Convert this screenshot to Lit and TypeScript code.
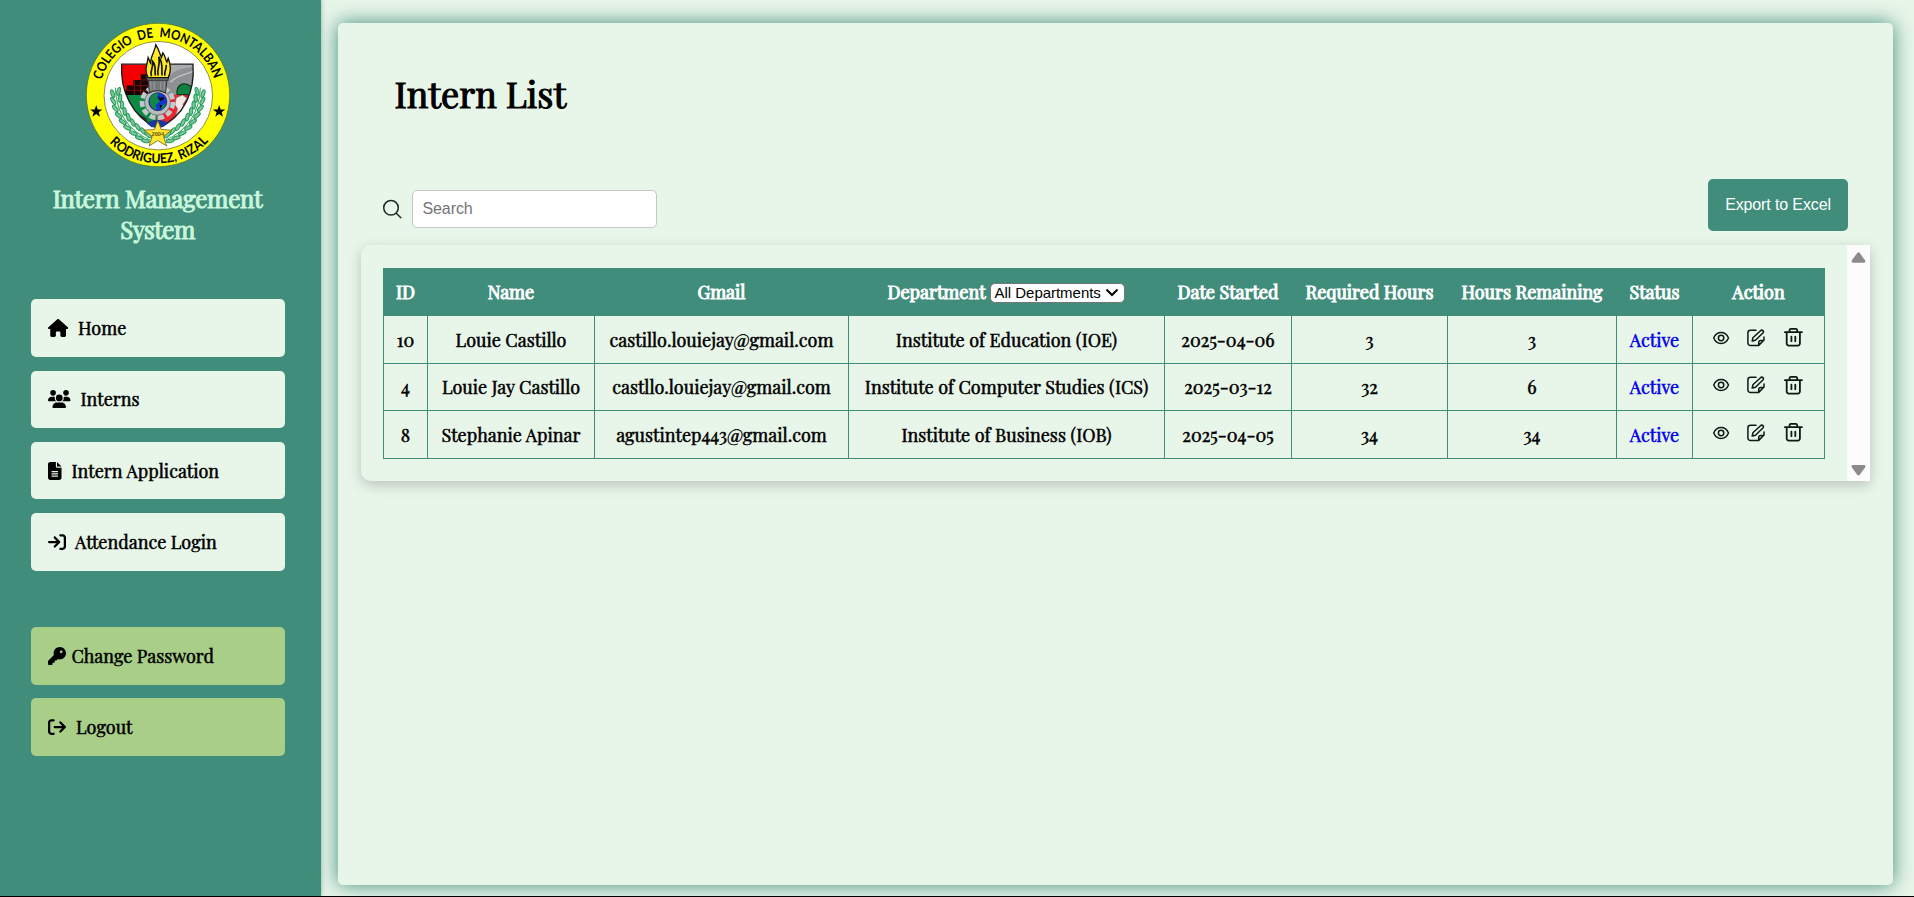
import { LitElement, html, svg, css } from "lit";
import { customElement, property } from "lit/decorators.js";

/** Sets a run of text to a given width by adjusting its tracking. */
@customElement("fit-text")
class FitText extends LitElement {
  @property() text = "";
  @property({ type: Number }) width = 0;

  static styles = css`
    :host { display: inline-block; white-space: nowrap; text-align: left; }
    .run { display: inline-block; white-space: pre; }
  `;

  render() {
    return html`<span class="run">${this.text}</span>`;
  }

  updated() {
    const run = this.renderRoot.querySelector(".run") as HTMLElement;
    run.style.letterSpacing = "normal";
    const natural = run.getBoundingClientRect().width;
    const gap = (this.width - natural) / Math.max(1, this.text.length - 1);
    // Tracking switches ligatures off, so it is applied only where it is visible.
    if (Math.abs(this.width - natural) > 2.5) run.style.letterSpacing = gap + "px";
  }
}

const t = (text: string, width: number) => html`<fit-text .text=${text} .width=${width}></fit-text>`;

const ICONS: Record<string, [number, string]> = {
  house: [576, "M575.8 255.5c0 18-15 32.1-32 32.1h-32l.7 160.2c0 2.7-.2 5.4-.5 8.1V472c0 22.1-17.9 40-40 40H456c-1.1 0-2.2 0-3.3-.1c-1.4 .1-2.8 .1-4.2 .1H416 392c-22.1 0-40-17.9-40-40V448 384c0-17.7-14.3-32-32-32H256c-17.7 0-32 14.3-32 32v64 24c0 22.1-17.9 40-40 40H160 128.1c-1.5 0-3-.1-4.5-.2c-1.2 .1-2.4 .2-3.6 .2H104c-22.1 0-40-17.9-40-40V360c0-.9 0-1.9 .1-2.8V287.6H32c-18 0-32-14-32-32.1c0-9 3-17 10-24L266.4 8c7-7 15-8 22-8s15 2 21 7L564.8 231.5c8 7 12 15 11 24z"],
  users: [640, "M144 0a80 80 0 1 1 0 160A80 80 0 1 1 144 0zM512 0a80 80 0 1 1 0 160A80 80 0 1 1 512 0zM0 298.7C0 239.8 47.8 192 106.7 192h42.7c15.9 0 31 3.5 44.6 9.7c-1.3 7.2-1.9 14.7-1.9 22.3c0 38.2 16.8 72.5 43.3 96c-.2 0-.4 0-.7 0H21.3C9.6 320 0 310.4 0 298.7zM405.3 320c-.2 0-.4 0-.7 0c26.6-23.5 43.3-57.8 43.3-96c0-7.6-.7-15-1.9-22.3c13.6-6.3 28.7-9.7 44.6-9.7h42.7C592.2 192 640 239.8 640 298.7c0 11.8-9.6 21.3-21.3 21.3H405.3zM224 224a96 96 0 1 1 192 0 96 96 0 1 1 -192 0zM128 485.3C128 411.7 187.7 352 261.3 352H378.7C452.3 352 512 411.7 512 485.3c0 14.7-11.9 26.7-26.7 26.7H154.7c-14.7 0-26.7-11.9-26.7-26.7z"],
  file: [384, "M64 0C28.7 0 0 28.7 0 64V448c0 35.3 28.7 64 64 64H320c35.3 0 64-28.7 64-64V160H256c-17.7 0-32-14.3-32-32V0H64zM256 0V128H384L256 0zM112 256H272c8.8 0 16 7.2 16 16s-7.2 16-16 16H112c-8.8 0-16-7.2-16-16s7.2-16 16-16zm0 64H272c8.8 0 16 7.2 16 16s-7.2 16-16 16H112c-8.8 0-16-7.2-16-16s7.2-16 16-16zm0 64H272c8.8 0 16 7.2 16 16s-7.2 16-16 16H112c-8.8 0-16-7.2-16-16s7.2-16 16-16z"],
  login: [512, "M352 96l64 0c17.7 0 32 14.3 32 32l0 256c0 17.7-14.3 32-32 32l-64 0c-17.7 0-32 14.3-32 32s14.3 32 32 32l64 0c53 0 96-43 96-96l0-256c0-53-43-96-96-96l-64 0c-17.7 0-32 14.3-32 32s14.3 32 32 32zm-9.4 182.6c12.5-12.5 12.5-32.8 0-45.3l-128-128c-12.5-12.5-32.8-12.5-45.3 0s-12.5 32.8 0 45.3L242.7 224 32 224c-17.7 0-32 14.3-32 32s14.3 32 32 32l210.7 0-73.4 73.4c-12.5 12.5-12.5 32.8 0 45.3s32.8 12.5 45.3 0l128-128z"],
  logout: [512, "M502.6 278.6c12.5-12.5 12.5-32.8 0-45.3l-128-128c-12.5-12.5-32.8-12.5-45.3 0s-12.5 32.8 0 45.3L402.7 224 192 224c-17.7 0-32 14.3-32 32s14.3 32 32 32l210.7 0-73.4 73.4c-12.5 12.5-12.5 32.8 0 45.3s32.8 12.5 45.3 0l128-128zM160 96c17.7 0 32-14.3 32-32s-14.3-32-32-32L96 32C43 32 0 75 0 128L0 384c0 53 43 96 96 96l64 0c17.7 0 32-14.3 32-32s-14.3-32-32-32l-64 0c-17.7 0-32-14.3-32-32l0-256c0-17.7 14.3-32 32-32l64 0z"],
  key: [512, "M336 352c97.2 0 176-78.8 176-176S433.2 0 336 0S160 78.8 160 176c0 18.7 2.9 36.8 8.3 53.7L7 391c-4.5 4.5-7 10.6-7 17v80c0 13.3 10.7 24 24 24h80c13.3 0 24-10.7 24-24V448h40c13.3 0 24-10.7 24-24V384h40c6.4 0 12.5-2.5 17-7l33.3-33.3c16.9 5.4 35 8.3 53.7 8.3zM376 96a40 40 0 1 1 0 80 40 40 0 1 1 0-80z"],
};

const glyph = (name: string) => {
  const [w, d] = ICONS[name];
  return html`<svg width=${(w / 512) * 18} height="18" viewBox="0 0 ${w} 512"><path d=${d}></path></svg>`;
};

const LEAVES = [
  [128, 250, -20], [146, 243, 15], [130, 272, -30], [150, 264, 8], [136, 294, -40], [156, 284, 0],
  [146, 315, -48], [164, 303, -8], [158, 334, -55], [175, 320, -15], [172, 352, -62], [188, 336, -25],
  [190, 368, -68], [203, 350, -32], [208, 382, -74], [219, 362, -40], [226, 391, -80], [234, 373, -50],
];

const laurel = svg`
  <path d="M136 232C138 300 170 360 240 388" fill="none" stroke="#3aa66a" stroke-width="3"/>
  ${LEAVES.map(([x, y, r]) => svg`<ellipse cx=${x} cy=${y} rx="5" ry="12" transform="rotate(${r} ${x} ${y})" fill="#7cc697" stroke="#1f9a55" stroke-width="3"/>`)}`;

const seal = html`
<svg class="seal" width="144" height="144" viewBox="48.500 39 430 430">
  <defs>
    <path id="arc-top" d="M95.200 209A175 175 0 0 1 432 209"/>
    <path id="arc-bottom" d="M118 396A204 204 0 0 0 416 390"/>
    <clipPath id="shield"><path d="M155 162H368C374 240 345 318 262 354C185 318 150 240 155 162Z"/></clipPath>
  </defs>
  <circle cx="263.500" cy="254" r="214" fill="#ffff00" stroke="#4d6b20" stroke-width="2"/>
  <circle cx="264.500" cy="256" r="162" fill="#fff" stroke="#55551a" stroke-width="2"/>
  <text class="ring"><textPath href="#arc-top" textLength="450" lengthAdjust="spacingAndGlyphs">COLEGIO&#160; DE&#160; MONTALBAN</textPath></text>
  <text class="ring"><textPath href="#arc-bottom" textLength="331" lengthAdjust="spacingAndGlyphs">RODRIGUEZ, RIZAL</textPath></text>
  <path d="M79 284l4.500 13h14l-11 8.500 4 13.500-11.500-8-11.500 8 4-13.500-11-8.500h14z"/>
  <path d="M446 284l4.500 13h14l-11 8.500 4 13.500-11.500-8-11.500 8 4-13.500-11-8.500h14z"/>
  ${laurel}
  <g transform="translate(526 0) scale(-1 1)">${laurel}</g>
  <g clip-path="url(#shield)">
    <path d="M150 160H262V254H150Z" fill="#f40000"/>
    <path d="M262 160H375V254H262Z" fill="#8e9191"/>
    <path d="M150 254H262V356H150Z" fill="#0a8a42"/>
    <path d="M262 254H375V356H262Z" fill="#e8262c"/>
    <path d="M212 192h26v62h-80v-14h12v-14h20v-17h22z" fill="#180606"/>
    <path d="M193 212v42M212 212v42M170 240h66M190 226h46M212 209h26" stroke="#a61212" stroke-width="2"/>
    <path d="M300 196C325 168 350 180 372 166V160H300Z" fill="#a9acac"/>
    <path d="M300 216C325 190 350 196 372 180" fill="none" stroke="#c4c6c6" stroke-width="4"/>
    <path d="M320 252C318 228 332 216 350 222L370 232V254Z" fill="#118141" stroke="#082a16" stroke-width="3"/>
    <path d="M318 262l18-8 14 10-12 18 10 14-18 24-14-4 6-20-8-14z" fill="#f4e8e4" stroke="#777" stroke-width="2"/>
    <path d="M206 310l24 14v30h-24z" fill="#333"/>
  </g>
  <path d="M155 162H368C374 240 345 318 262 354C185 318 150 240 155 162Z" fill="none" stroke="#1d1d1d" stroke-width="4"/>
  <path d="M230 338c16-12 50-12 64 0l-16 12h-34z" fill="#18389e"/>
  <circle cx="262" cy="276" r="46" fill="none" stroke="#c3c7c9" stroke-width="14" stroke-dasharray="18 8"/>
  <circle cx="262" cy="276" r="38" fill="#b9bec1" stroke="#6d7375" stroke-width="2"/>
  <circle cx="263" cy="274" r="27" fill="#1534cf" stroke="#0b1a4a" stroke-width="2"/>
  <path d="M240 262c5-12 18-14 25-11l-4 11 8 12-12 8 2 16c-14-2-24-18-19-36zM276 286l10-8-3 14-10 7z" fill="#128746"/>
  <path d="M262 256l8 6 12-2-2 8-10 4zM268 282l8 4-6 8z" fill="#0b0b16"/>
  <path d="M228 196h68l-3 14H232zM234 210h56l-4 38c-16-8-34-8-48 0z" fill="#747879" stroke="#303333" stroke-width="3"/>
  <path d="M242 214v26M252 214v24M272 214v24M282 214v26" stroke="#9b9f9f" stroke-width="3"/>
  <path d="M234 202C222 180 230 170 234 142C240 152 238 156 242 160C240 138 254 126 257 104C268 120 268 132 274 142C276 136 276 132 278 128C286 138 286 150 290 156L294 144C304 170 302 186 294 202Z" fill="#ffe92b" stroke="#141400" stroke-width="4"/>
  <path d="M244 198C238 180 250 176 248 154C260 168 252 184 256 196M264 196C258 176 272 170 266 140C282 164 272 180 276 196M284 196C282 180 290 176 288 164" fill="none" stroke="#141400" stroke-width="5"/>
  <path d="M263 330l10 27 31 2-24 19 9 28-26-16-26 16 9-28-24-19 31-2z" fill="#ffe732" stroke="#776513" stroke-width="2.500"/>
  <text class="year" x="263" y="376" text-anchor="middle">2004</text>
</svg>`;

const NAV = [
  { icon: "house", label: "Home", w: 48.5, gap: 9.75 },
  { icon: "users", label: "Interns", w: 59, gap: 10 },
  { icon: "file", label: "Intern Application", w: 147, gap: 10 },
  { icon: "login", label: "Attendance Login", w: 142, gap: 9 },
];
const ACCOUNT = [
  { icon: "key", label: "Change Password", w: 142, gap: 5.4 },
  { icon: "logout", label: "Logout", w: 56.5, gap: 10 },
];

const COLUMNS = [44, 167, 254, 316, 127, 156, 169, 76, 132];

const ROWS: [string, number][][] = [
  [["10", 17], ["Louie Castillo", 111], ["castillo.louiejay@gmail.com", 224], ["Institute of Education (IOE)", 221.5], ["2025-04-06", 93], ["3", 8.5], ["3", 8.5]],
  [["4", 9], ["Louie Jay Castillo", 138.5], ["castllo.louiejay@gmail.com", 218], ["Institute of Computer Studies (ICS)", 283.5], ["2025-03-12", 88], ["32", 17], ["6", 9]],
  [["8", 9], ["Stephanie Apinar", 139], ["agustintep443@gmail.com", 211], ["Institute of Business (IOB)", 210.5], ["2025-04-05", 91], ["34", 17], ["34", 17]],
];

@customElement("app-root")
class AppRoot extends LitElement {
  static styles = css`
    :host {
      display: block;
      font-family: "Playfair Display", "Liberation Serif", serif;
      color: #000;
    }
    * { box-sizing: border-box; }
    .app {
      display: grid;
      grid-template-columns: 321px 1fr;
      height: 897px;
      overflow: hidden;
      background: #e8f5e9;
      border-bottom: 1px solid #000;
    }
    .sidebar {
      background: #3f8d7a;
      padding: 22.5px 36px 0 31px;
      display: flex;
      flex-direction: column;
      box-shadow: 0 0 5px rgba(63, 141, 122, 0.6);
    }
    .brand { display: flex; flex-direction: column; align-items: center; height: 276.9px; }
    .seal { display: block; flex: none; margin-right: 1px; }
    .ring { font: 700 40px "Lato", sans-serif; }
    .year { font: 700 17px "Liberation Sans", sans-serif; fill: #6b5200; }
    .brand-name {
      margin: 16px 1px 0 0;
      font-size: 24px;
      line-height: 31px;
      text-align: center;
      color: #c8f7dc;
      -webkit-text-stroke: 1.1px #c8f7dc;
    }
    .line { display: block; }
    .menu { display: flex; flex-direction: column; gap: 13.6px; }
    .account { margin-top: 56.4px; }
    .item {
      display: flex;
      align-items: center;
      height: 57.6px;
      padding: 0 17px;
      border-radius: 5px;
      background: #e8f5e9;
      font-size: 18px;
      line-height: 24px;
      -webkit-text-stroke: 0.5px #000;
    }
    .item svg { flex: none; stroke: none; }
    .account .item { background: #a8ce88; }

    .content { padding: 23px 21px 11px 17px; display: flex; }
    .card {
      flex: 1;
      min-width: 0;
      border-radius: 5px;
      background: #e8f5e9;
      box-shadow: 0 0 20px #3f8d7a;
      padding: 0 23px;
      display: flex;
      flex-direction: column;
    }
    .title {
      margin: 0;
      padding: 47px 0 0 33.5px;
      font-size: 36px;
      line-height: 46px;
      font-weight: 400;
      height: 156px;
      -webkit-text-stroke: 1.1px #000;
    }
    .toolbar { display: flex; align-items: center; height: 52px; padding: 0 22px 0 21px; }
    .search { display: flex; align-items: center; gap: 10px; padding-top: 8px; }
    input {
      width: 245px;
      height: 38px;
      border: 1px solid #c4c8c4;
      border-radius: 5px;
      padding: 0 9.5px;
      background: #fff;
      font: 16px "Liberation Sans", Arial, sans-serif;
      letter-spacing: -0.1px;
      outline: none;
    }
    input::placeholder { color: #757575; }
    .export {
      margin-left: auto;
      width: 140px;
      height: 52px;
      border: 0;
      border-radius: 5px;
      background: #3f8d7a;
      color: #fff;
      padding: 0;
      font: 16px "Liberation Sans", Arial, sans-serif;
      letter-spacing: -0.13px;
    }
    .panel {
      margin-top: 14px;
      height: 236px;
      display: flex;
      border-radius: 10px 0 0 10px;
      box-shadow: 0 4px 14px rgba(0, 0, 0, 0.2);
    }
    .scroll { flex: 1; padding: 23px 22px 0 22px; }
    .bar {
      width: 23px;
      background: #fcfcfc;
      display: flex;
      flex-direction: column;
      justify-content: space-between;
      align-items: center;
      padding: 6.5px 0 5.5px;
    }
    table {
      width: 1442px;
      table-layout: fixed;
      border-collapse: separate;
      border-spacing: 0;
      border-left: 1px solid #3f8d7a;
      font-size: 18px;
      line-height: 24px;
    }
    th, td {
      padding: 0;
      text-align: center;
      vertical-align: middle;
      border-right: 1px solid #3f8d7a;
      border-bottom: 1px solid #3f8d7a;
      white-space: nowrap;
    }
    th {
      height: 48px;
      background: #3f8d7a;
      color: #fff;
      font-weight: 400;
      -webkit-text-stroke: 1px #fff;
    }
    td { height: 48px; -webkit-text-stroke: 0.5px #000; }
    tr.mid td { height: 47px; }
    td.status { color: #0000ee; -webkit-text-stroke: 0.5px #0000ee; }
    .dept { display: flex; justify-content: center; align-items: center; gap: 4px; padding-right: 1px; }
    .picker {
      display: flex;
      align-items: center;
      justify-content: space-between;
      width: 135px;
      height: 20px;
      margin-top: 2px;
      padding: 0 5px 0 4px;
      border: 1px solid #767676;
      border-radius: 5px;
      background: #fff;
      color: #000;
      font: 15px "Liberation Sans", Arial, sans-serif;
      letter-spacing: -0.03px;
      -webkit-text-stroke: 0;
    }
    .actions {
      display: flex;
      align-items: center;
      padding: 0 0 4px 19.1px;
      gap: 16.8px;
    }
    .actions svg { display: block; fill: none; stroke: #0c1a12; stroke-width: 1.5; stroke-linecap: round; stroke-linejoin: round; }
    .actions svg:last-child { margin-left: 2px; }
  `;

  private item(n: { icon: string; label: string; w: number; gap: number }) {
    return html`<div class="item">${glyph(n.icon)}<span style="margin-left:${n.gap}px">${t(n.label, n.w)}</span></div>`;
  }

  private actions() {
    return html`<div class="actions">
      <svg width="18" height="18" viewBox="0 0 18 18"><path d="M1.700 9C3 6 5.800 3.600 9.100 3.600S15.200 6 16.500 9C15.200 12 12.400 14.400 9.100 14.400S3 12 1.700 9Z"/><circle cx="9.100" cy="9" r="2.700"/></svg>
      <svg width="18" height="18" viewBox="0 0 18 18"><path d="M9 1.200H3.500A2.600 2.600 0 0 0 .9 3.800V14A2.600 2.600 0 0 0 3.500 16.600H11.500L17 11V8M11.700 16.400V13.600A2.200 2.200 0 0 1 13.900 11.400H16.700"/><path d="M5.200 12L5.900 8.800L13.500 1.700A1.600 1.600 0 0 1 15.900 4L8.400 11.300Z"/></svg>
      <svg width="19" height="19" viewBox="0 0 19 19"><path d="M.9 4.200H17.900M2.700 4.500V15.500A2 2 0 0 0 4.700 17.600H13.900A2 2 0 0 0 15.900 15.500V4.500M5.500 4V2.300A1.500 1.500 0 0 1 7 .9H11.700A1.500 1.500 0 0 1 13.200 2.300V4M7.400 8.600V13.200M11.300 8.600V13.200" stroke-width="1.800"/></svg>
    </div>`;
  }

  render() {
    return html`
      <div class="app">
        <nav class="sidebar">
          <div class="brand">
            ${seal}
            <div class="brand-name"><span class="line">${t("Intern Management", 210)}</span><span class="line">${t("System", 75)}</span></div>
          </div>
          <div class="menu">${NAV.map((n) => this.item(n))}</div>
          <div class="menu account">${ACCOUNT.map((n) => this.item(n))}</div>
        </nav>
        <main class="content">
          <section class="card">
            <h1 class="title">${t("Intern List", 172)}</h1>
            <div class="toolbar">
              <div class="search">
                <svg width="20" height="20" viewBox="0 0 20 20" fill="none" stroke="#1e2b22" stroke-width="1.500" stroke-linecap="round"><circle cx="9" cy="8.800" r="7.300"/><path d="M14.300 14.200L18.800 18.700"/></svg>
                <input type="text" placeholder="Search" />
              </div>
              <button class="export">Export to Excel</button>
            </div>
            <div class="panel">
              <div class="scroll">
                <table>
                  <colgroup>${COLUMNS.map((w) => html`<col width=${w} />`)}</colgroup>
                  <thead><tr>
                    <th>${t("ID", 19.5)}</th><th>${t("Name", 46.5)}</th><th>${t("Gmail", 48.5)}</th>
                    <th><div class="dept">${t("Department", 98.5)}<div class="picker"><span>All Departments</span><svg width="14" height="9" viewBox="0 0 14 9" fill="none" stroke="#000" stroke-width="2"><path d="M1.500 1.500L7 7L12.500 1.500"/></svg></div></div></th>
                    <th>${t("Date Started", 101)}</th><th>${t("Required Hours", 128)}</th><th>${t("Hours Remaining", 142)}</th><th>${t("Status", 50)}</th><th>${t("Action", 53)}</th>
                  </tr></thead>
                  <tbody>${ROWS.map((r, i) => html`<tr class=${i === 1 ? "mid" : ""}>
                    ${r.map(([s, w]) => html`<td>${t(s, w)}</td>`)}
                    <td class="status">${t("Active", 50)}</td>
                    <td>${this.actions()}</td>
                  </tr>`)}</tbody>
                </table>
              </div>
              <div class="bar">
                <svg width="15" height="11" viewBox="0 0 15 11" fill="#8b8b8b"><path d="M6.200 1Q7.500-.5 8.800 1L14.200 8.500Q15 10.700 13 10.700H2Q0 10.700.8 8.500Z"/></svg>
                <svg width="15" height="11" viewBox="0 0 15 11" fill="#8b8b8b"><path d="M6.200 9.700Q7.500 11.200 8.800 9.700L14.200 2.200Q15 0 13 0H2Q0 0 .8 2.200Z"/></svg>
              </div>
            </div>
          </section>
        </main>
      </div>
    `;
  }
}
